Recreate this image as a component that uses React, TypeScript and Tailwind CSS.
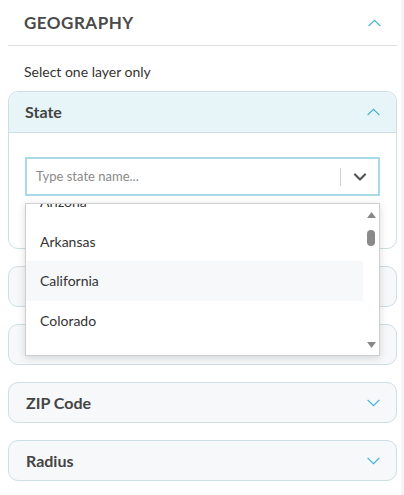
import { ChevronDown } from "lucide-react";

const font = { fontFamily: "Lato, 'Noto Sans', sans-serif" };

function Chevron({ up }: { up?: boolean }) {
  return (
    <svg width="13" height="8" viewBox="0 0 13 8" fill="none" stroke="#3fb2d9" strokeWidth="1.2">
      <path d={up ? "M0.6 7.2L6.5 1.3L12.4 7.2" : "M0.6 0.8L6.5 6.7L12.4 0.8"} />
    </svg>
  );
}

function Panel({ title }: { title: string }) {
  return (
    <div className="flex h-[41px] items-center justify-between rounded-[10px] border border-[#cddfe4] bg-[#f6f8fa] pl-[17px] pr-[16px]">
      <span className="text-[16px] font-bold text-[#444]">{title}</span>
      <Chevron />
    </div>
  );
}

const states = ["Arizona", "Arkansas", "California", "Colorado", "Connecticut"];

export default function App() {
  return (
    <div className="flex min-h-[495px] bg-white" style={font}>
      <div className="w-[397px] pl-2">
        <div className="flex h-[46px] items-center justify-between border-b border-[#dedede] pl-4 pr-[16px]">
          <span className="text-[17px] font-bold tracking-[0.5px] text-[#4a4a4a]">GEOGRAPHY</span>
          <Chevron up />
        </div>
        <p className="pl-4 pt-[17px] pb-[10px] text-[14px] leading-[18px] text-[#333]">Select one layer only</p>

        <div className="relative rounded-[10px] border border-[#cddfe4] bg-white">
          <div className="flex h-[41px] items-center justify-between rounded-t-[10px] border-b border-[#cddfe4] bg-[#e7f5f8] pl-[16px] pr-[16px]">
            <span className="text-[16px] font-bold text-[#444]">State</span>
            <Chevron up />
          </div>
          <div className="relative px-4 pt-6 pb-[52px]">
            <div className="flex h-[39px] items-center border-2 border-[#a9d9e7] bg-white">
              <span className="flex-1 pl-[9px] text-[13px] text-[#8a8a8a]">Type state name...</span>
              <div className="h-[18px] w-px bg-[#cfcfcf]" />
              <div className="flex w-[37px] items-center justify-center">
                <ChevronDown size={20} strokeWidth={2.6} className="text-[#555]" />
              </div>
            </div>
            <div className="absolute left-4 right-4 top-[70px] z-10 flex h-[153px] border border-[#cfcfcf] bg-white shadow-[0_2px_8px_rgba(0,0,0,0.15)]">
              <div className="flex-1 overflow-hidden">
                <div className="-mt-[22px]">
                  {states.map((s) => (
                    <div
                      key={s}
                      className={`flex h-[39.5px] items-center pl-[14px] text-[14px] text-[#333] ${
                        s === "California" ? "bg-[#f7f8f9]" : ""
                      }`}
                    >
                      {s}
                    </div>
                  ))}
                </div>
              </div>
              <div className="flex w-[16px] flex-col items-center py-[7px]">
                <svg width="9" height="6" viewBox="0 0 9 6" className="mt-[1px]">
                  <path d="M4.5 0L9 6H0z" fill="#888" />
                </svg>
                <div className="mt-[12px] h-[16px] w-[8px] rounded-full bg-[#8a8a8a]" />
                <div className="flex-1" />
                <svg width="9" height="6" viewBox="0 0 9 6">
                  <path d="M0 0h9L4.5 6z" fill="#888" />
                </svg>
              </div>
            </div>
          </div>
        </div>

        <div className="mt-[17px] flex flex-col gap-[17px]">
          <Panel title="County" />
          <Panel title="City" />
          <Panel title="ZIP Code" />
          <Panel title="Radius" />
        </div>
      </div>
      <div className="w-[4px]" />
      <div className="w-[3px] bg-[#f4f4f4]" />
    </div>
  );
}
